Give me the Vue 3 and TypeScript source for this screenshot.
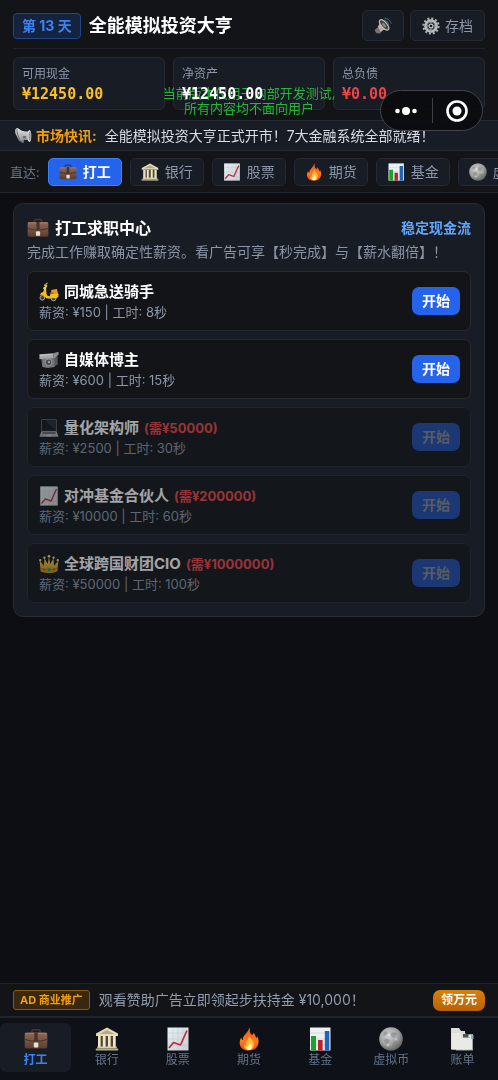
<script setup lang="ts">
import { computed, ref } from 'vue'

interface Section {
  id: string
  label: string
  icon: string
}

interface Job {
  icon: string
  name: string
  pay: number
  seconds: number
  required?: number
}

const sections: Section[] = [
  { id: 'work', label: '打工', icon: 'briefcase' },
  { id: 'bank', label: '银行', icon: 'bank' },
  { id: 'stock', label: '股票', icon: 'trend' },
  { id: 'futures', label: '期货', icon: 'fire' },
  { id: 'fund', label: '基金', icon: 'bars' },
  { id: 'crypto', label: '虚拟币', icon: 'moon' },
]
const navItems: Section[] = [...sections, { id: 'bill', label: '账单', icon: 'files' }]

const jobs: Job[] = [
  { icon: 'scooter', name: '同城急送骑手', pay: 150, seconds: 8 },
  { icon: 'camera', name: '自媒体博主', pay: 600, seconds: 15 },
  { icon: 'laptop', name: '量化架构师', pay: 2500, seconds: 30, required: 50000 },
  { icon: 'trend', name: '对冲基金合伙人', pay: 10000, seconds: 60, required: 200000 },
  { icon: 'crown', name: '全球跨国财团CIO', pay: 50000, seconds: 100, required: 1000000 },
]

const active = ref('work')
const cash = ref(12450)
const debt = ref(0)
const money = (n: number): string => `¥${n.toFixed(2)}`

const stats = computed(() => [
  { label: '可用现金', value: money(cash.value), tone: 'gold' },
  { label: '净资产', value: money(cash.value - debt.value), tone: 'white' },
  { label: '总负债', value: money(debt.value), tone: 'red' },
])

const locked = (job: Job): boolean => job.required !== undefined && cash.value < job.required
</script>

<template>
  <svg class="sprite" aria-hidden="true">
    <defs>
      <linearGradient id="leather" x1="0" y1="0" x2="0" y2="1">
        <stop offset="0" stop-color="#8f6a55" />
        <stop offset="1" stop-color="#5b3d31" />
      </linearGradient>
      <linearGradient id="flame" x1="0" y1="0" x2="0" y2="1">
        <stop offset="0" stop-color="#f4511e" />
        <stop offset="0.6" stop-color="#ff7a1c" />
        <stop offset="1" stop-color="#f2461b" />
      </linearGradient>
      <radialGradient id="lunar" cx="0.4" cy="0.35" r="0.7">
        <stop offset="0" stop-color="#d2d3d2" />
        <stop offset="0.6" stop-color="#9c9e9f" />
        <stop offset="1" stop-color="#55585b" />
      </radialGradient>
      <linearGradient id="paper" x1="0" y1="0" x2="1" y2="1">
        <stop offset="0" stop-color="#e9f0f3" />
        <stop offset="1" stop-color="#c7d0d6" />
      </linearGradient>
      <linearGradient id="gold" x1="0" y1="0" x2="0" y2="1">
        <stop offset="0" stop-color="#ffd84a" />
        <stop offset="1" stop-color="#c98a12" />
      </linearGradient>
      <linearGradient id="horn" x1="0" y1="0" x2="0" y2="1">
        <stop offset="0" stop-color="#e8e8e6" />
        <stop offset="1" stop-color="#8c8e90" />
      </linearGradient>
    </defs>
    <symbol id="briefcase" viewBox="0 0 24 24">
      <path d="M8 6V4.200Q8 2.800 9.500 2.800H14.500Q16 2.800 16 4.200V6" fill="none" stroke="#4b342b" stroke-width="1.600" />
      <rect x="0.700" y="5.500" width="22.600" height="16" rx="1.800" fill="url(#leather)" />
      <path d="M1 6.500H23" stroke="#aa8370" stroke-width="0.800" />
      <path d="M1 12.500Q12 16 23 12.500" fill="none" stroke="#46302a" stroke-width="1" />
      <path d="M10.300 5.500H13.700V14H10.300Z" fill="#4a322a" />
      <rect x="9.800" y="15.500" width="4.500" height="5" rx="1" fill="#e4e0d5" />
    </symbol>
    <symbol id="bank" viewBox="0 0 24 24">
      <path d="M12 0.500L23 6.500V9H1V6.500Z" fill="#e4dbb9" />
      <path d="M12 3L19.500 7H4.500Z" fill="#b3a984" />
      <path d="M3 9H21V20H3Z" fill="#4d4736" />
      <path d="M3 9H6V20H3ZM7.800 9H10.700V20H7.800ZM13 9H16V20H13ZM18 9H21V20H18Z" fill="#efe7c8" />
      <path d="M5.200 9H6V20H5.200ZM10 9H10.700V20H10ZM15.200 9H16V20H15.200ZM20.200 9H21V20H20.200Z" fill="#a89f7c" />
      <path d="M2.300 19.500H21.700V21.500H2.300Z" fill="#d8ceaa" />
      <path d="M0.800 21.500H23.200V23.500H0.800Z" fill="#b9ae87" />
    </symbol>
    <symbol id="trend" viewBox="0 0 24 24">
      <rect x="1.500" y="0.500" width="21" height="23" fill="url(#paper)" />
      <path d="M7 1V23M12 1V23M17 1V23M2 6H22M2 12H22M2 18H22" stroke="#b9c7ce" stroke-width="0.500" />
      <path d="M3 21L7.500 15.500L14.500 18L21 3.500" fill="none" stroke="#c7283d" stroke-width="1.700" stroke-linejoin="round" />
    </symbol>
    <symbol id="fire" viewBox="0 0 24 24">
      <path d="M12.500 0.500C13.500 3 12 4.500 14 7C15.500 8.800 16.500 7.500 16.300 5.500C18.500 7.500 18.300 9.500 19.500 11C20 10.500 20.100 10 20 9.200C23 13 22.500 23.500 12 23.500C2.500 23.500 1 15.500 4.200 10.500C4.500 12 5 12.800 6 13C5 9 10.500 6.500 12.500 0.500Z" fill="url(#flame)" />
      <path d="M12 8C12.500 11.500 17 13 17 17.500C17 21 15 23 12 23C8.500 23 6.500 20.500 7 17.500C7.500 18.300 8.200 18.800 9 18.500C8 15 12 12.500 12 8Z" fill="#ffba38" />
      <path d="M12.500 14C12.500 16.500 15 17.200 15 19.700C15 22 13.500 23 12 23C10 23 8.800 21.500 9.300 20C11.500 20 12.500 17 12.500 14Z" fill="#fff0a0" />
    </symbol>
    <symbol id="bars" viewBox="0 0 24 24">
      <rect x="2" y="0.500" width="20.500" height="23" fill="#edf0f3" />
      <path d="M2 6H22M2 12H22M2 18H22" stroke="#c7cdd2" stroke-width="0.600" />
      <rect x="3" y="9" width="5" height="14.500" fill="#18a52d" />
      <rect x="10" y="13" width="4.600" height="10.500" fill="#bd2029" />
      <rect x="16.800" y="4" width="4.500" height="19.500" fill="#1e65b8" />
    </symbol>
    <symbol id="moon" viewBox="0 0 24 24">
      <circle cx="12" cy="12" r="11.800" fill="url(#lunar)" />
      <path d="M5 5Q8 3 9 6Q7 9 4 9ZM12 6Q16 4 18 7Q16 8 15 11Q11 10 12 6ZM5 13Q9 10 11 14Q9 17 7 17ZM14 15Q18 13 20 16Q17 20 13 20Z" fill="#737678" opacity="0.450" />
      <circle cx="9" cy="18" r="1.400" fill="#d5d6d5" opacity="0.700" />
      <circle cx="17" cy="12" r="1" fill="#d5d6d5" opacity="0.700" />
      <circle cx="10" cy="8" r="0.900" fill="#eeeeec" opacity="0.700" />
    </symbol>
    <symbol id="files" viewBox="0 0 24 24">
      <path d="M4 4H14L16 7H23V23.500H6Z" fill="#9da1a3" />
      <path d="M12 8H22V22.500H12Z" fill="#e9e9e5" />
      <path d="M1 1H9L11 4H15V22.500H1Z" fill="#dddeda" />
      <path d="M2 6H10L12 10H20V22.500H2Z" fill="#e9e9e5" />
      <path d="M12 10.500H20" stroke="#bfc1bd" stroke-width="0.700" />
      <rect x="13" y="7" width="5.500" height="3.500" fill="#4d5558" />
      <rect x="21" y="8" width="2.500" height="4" fill="#87aeb7" />
    </symbol>
    <symbol id="megaphone" viewBox="0 0 24 24">
      <path d="M7 14L14 17L12.500 21.500L8.500 19.500Z" fill="#75787b" />
      <path d="M2 3Q0.500 7 3.500 12L7 19Q13 15 21.500 18.500V5.500Q11 7 6 2Q4 0.500 2 3Z" fill="url(#horn)" />
      <path d="M4 2Q3 7 8 18" fill="none" stroke="#77797b" stroke-width="1.400" />
      <ellipse cx="20.500" cy="12" rx="2.600" ry="8" fill="#dededa" />
      <ellipse cx="20.800" cy="12" rx="1.400" ry="5.800" fill="#8d9092" />
      <path d="M12 12H16V15H12Z" fill="#6a6d70" />
    </symbol>
    <symbol id="speaker" viewBox="0 0 24 24">
      <path d="M1 17L6 13L11 18L8 22Q2 23 1 17Z" fill="#77736d" />
      <path d="M5 13Q8 10 8 4L19 17Q13 16 9 20Z" fill="#b6b1a5" />
      <ellipse cx="13.500" cy="10.500" rx="3.700" ry="8.500" transform="rotate(-41 13.500 10.500)" fill="#454744" stroke="#c9c5b9" stroke-width="1.500" />
      <ellipse cx="13.500" cy="11" rx="1.400" ry="3.500" transform="rotate(-41 13.500 11)" fill="#908d84" />
      <path d="M14 4Q19 5 20 11M14 1.500Q21 2 23 9M16 6Q18 7 18 9" fill="none" stroke="#4e7180" stroke-width="1.200" />
    </symbol>
    <symbol id="gear" viewBox="0 0 24 24">
      <circle cx="12" cy="12" r="10" fill="none" stroke="#acb0b2" stroke-width="3" stroke-dasharray="2.700 2.540" />
      <circle cx="12" cy="12" r="7.300" fill="none" stroke="#b9bcbd" stroke-width="3.600" />
      <circle cx="12" cy="12" r="5" fill="none" stroke="#707579" stroke-width="1.500" />
      <circle cx="12" cy="12" r="2.600" fill="none" stroke="#bfc1c2" stroke-width="1.600" />
      <path d="M12 3V9M12 15V21M3 12H9M15 12H21" stroke="#a2a5a7" stroke-width="1.200" />
    </symbol>
    <symbol id="scooter" viewBox="0 0 24 24">
      <circle cx="4" cy="19" r="2.800" fill="#3d3e41" stroke="#a8a9aa" stroke-width="1.200" />
      <circle cx="17.500" cy="19.800" r="2.800" fill="#3d3e41" stroke="#a8a9aa" stroke-width="1.200" />
      <path d="M6.500 4L9.500 3L10 5.500L8.500 7L9 14Q9.500 17 13 17L14 13Q20 10 23.500 14.500Q24 18 21 19.500H9Q6 18 5 16Q2 14.500 1 17Q1 13 5 12L7 6.500Z" fill="#f2be22" />
      <path d="M14.500 9.500L21.500 8.500L23 14H15Z" fill="#e79a1e" />
      <path d="M12.500 12.500H17.500V14H13Z" fill="#94511f" />
      <path d="M10.500 1L6 4M10 19H15" stroke="#c9b578" stroke-width="1.300" />
      <circle cx="6.500" cy="7.500" r="1.400" fill="#ffe373" />
    </symbol>
    <symbol id="camera" viewBox="0 0 24 24">
      <path d="M2.500 8H19V20.500Q10 22.500 4 20.500Z" fill="#72757a" />
      <path d="M0.500 5L17 4V9.500L0.500 11Z" fill="#a4a7aa" />
      <path d="M17 4L23.500 2V5L20 9.500H17Z" fill="#8b8e91" />
      <path d="M1 6.500L16 5.500" stroke="#c9cbcd" stroke-width="1" />
      <circle cx="11.500" cy="14.800" r="4" fill="#44484b" stroke="#a2a5a7" />
      <circle cx="12" cy="14.500" r="1.500" fill="#9099a0" />
      <path d="M19 9.500L22.500 8V17.500L19 19.500Z" fill="#54575b" />
    </symbol>
    <symbol id="laptop" viewBox="0 0 24 24">
      <path d="M3 1.500H21V16H3Z" fill="#9a9ea2" />
      <path d="M3.600 2.100H20.400V15.500H3.600Z" fill="#0f161b" />
      <path d="M9 2.100H20.400V15L9 5Z" fill="#1f2a31" />
      <path d="M3 16H21L23.500 22.500H0.500Z" fill="#adafb2" />
      <path d="M4.500 17H19.500L20.300 19H3.700Z" fill="#4b4f53" />
      <path d="M9.500 20H14.500L15 22H9Z" fill="#c9cbcd" />
    </symbol>
    <symbol id="crown" viewBox="0 0 24 24">
      <path d="M2 21L0.800 8L6 14L6.500 5L10.500 12L12 3L13.500 12L17.500 5L18 14L23.200 8L22 21Q12 25 2 21Z" fill="url(#gold)" />
      <path d="M2 17Q12 21 22 17" fill="none" stroke="#8e5c0b" stroke-width="0.800" />
      <circle cx="12" cy="18.800" r="2.200" fill="#259b62" />
      <circle cx="6" cy="18.500" r="1.200" fill="#bc3540" />
      <circle cx="18" cy="18.500" r="1.200" fill="#bc3540" />
      <g fill="#ffe376">
        <circle cx="1.500" cy="7.500" r="1.400" /><circle cx="6.500" cy="4.500" r="1.400" />
        <circle cx="12" cy="2.700" r="1.600" /><circle cx="17.500" cy="4.500" r="1.400" />
        <circle cx="22.500" cy="7.500" r="1.400" />
      </g>
    </symbol>
  </svg>

  <div class="app">
    <header class="top">
      <div class="title-row">
        <span class="day">第 13 天</span>
        <h1>全能模拟投资大亨</h1>
        <button class="tool" type="button" aria-label="声音">
          <svg class="icon"><use href="#speaker" /></svg>
        </button>
        <button class="tool" type="button">
          <svg class="icon"><use href="#gear" /></svg>存档
        </button>
      </div>
      <div class="stats">
        <div v-for="s in stats" :key="s.label" class="stat">
          <span class="stat-label">{{ s.label }}</span>
          <strong class="stat-value" :class="s.tone">{{ s.value }}</strong>
        </div>
      </div>
      <p class="notice">当前版本仅用于内部开发测试,<br />所有内容均不面向用户</p>
      <div class="capsule">
        <button type="button" aria-label="更多">
          <svg width="22" height="10" viewBox="0 0 22 10" fill="#fff">
            <circle cx="2.500" cy="5" r="2.300" /><circle cx="11" cy="5" r="4" /><circle cx="19.500" cy="5" r="2.300" />
          </svg>
        </button>
        <button type="button" aria-label="关闭">
          <svg width="22" height="22" viewBox="0 0 22 22">
            <circle cx="11" cy="11" r="9.500" fill="none" stroke="#fff" stroke-width="2.600" />
            <circle cx="11" cy="11" r="4.500" fill="#fff" />
          </svg>
        </button>
      </div>
    </header>

    <div class="ticker">
      <svg class="icon"><use href="#megaphone" /></svg>
      <strong>市场快讯:</strong>
      <span>全能模拟投资大亨正式开市！7大金融系统全部就绪！</span>
    </div>

    <nav class="shortcuts" aria-label="直达">
      <span class="shortcuts-label">直达:</span>
      <button
        v-for="s in sections"
        :key="s.id"
        type="button"
        class="chip"
        :class="{ on: active === s.id }"
        @click="active = s.id"
      >
        <svg class="icon"><use :href="'#' + s.icon" /></svg>{{ s.label }}
      </button>
    </nav>

    <main>
      <section class="panel">
        <div class="panel-head">
          <h2><svg class="icon"><use href="#briefcase" /></svg>打工求职中心</h2>
          <span class="tag">稳定现金流</span>
        </div>
        <p class="desc">完成工作赚取确定性薪资。看广告可享【秒完成】与【薪水翻倍】！</p>
        <ul class="jobs">
          <li v-for="job in jobs" :key="job.name" class="job" :class="{ locked: locked(job) }">
            <div class="job-info">
              <h3>
                <svg class="icon"><use :href="'#' + job.icon" /></svg>{{ job.name }}
                <span v-if="job.required" class="need">(需¥{{ job.required }})</span>
              </h3>
              <p>薪资: ¥{{ job.pay }} | 工时: {{ job.seconds }}秒</p>
            </div>
            <button class="start" type="button" :disabled="locked(job)">开始</button>
          </li>
        </ul>
      </section>
    </main>

    <footer>
      <div class="ad">
        <span class="ad-badge">AD 商业推广</span>
        <span class="ad-text">观看赞助广告立即领起步扶持金 ¥10,000！</span>
        <button type="button" class="claim">领万元</button>
      </div>
      <nav class="tabbar" aria-label="主导航">
        <button
          v-for="n in navItems"
          :key="n.id"
          type="button"
          :class="{ on: active === n.id }"
          @click="active = n.id"
        >
          <svg class="icon"><use :href="'#' + n.icon" /></svg>
          <span>{{ n.label }}</span>
        </button>
      </nav>
    </footer>
  </div>
</template>

<style>
body {
  margin: 0;
  background: #0c0e13;
}
</style>

<style scoped>
.sprite {
  position: absolute;
  width: 0;
  height: 0;
}
.app {
  display: flex;
  flex-direction: column;
  min-height: 100vh;
  overflow: hidden;
  background: #0c0e13;
  color: #fff;
  font-family: Inter, "Noto Sans CJK SC", sans-serif;
  font-size: 14px;
  line-height: 20px;
}
h1, h2, h3, p, ul {
  margin: 0;
  padding: 0;
}
button {
  box-sizing: border-box;
  margin: 0;
  padding: 0;
  border: 0;
  background: none;
  color: inherit;
  font: inherit;
  cursor: pointer;
}
.icon {
  flex: none;
  width: 18px;
  height: 18px;
}
.top {
  position: relative;
  padding: 10px 13px;
  background: #121417;
}
.title-row {
  display: flex;
  align-items: center;
  gap: 6px;
  padding-bottom: 7px;
  border-bottom: 1px solid #1f2228;
}
.day {
  padding: 2px 8px;
  border: 1px solid #1f458d;
  border-radius: 4px;
  background: #16233f;
  color: #3b82f6;
  font-weight: 700;
}
h1 {
  flex: 1;
  padding-left: 2px;
  font-size: 18px;
  line-height: 26px;
  font-weight: 700;
}
.tool {
  display: flex;
  align-items: center;
  gap: 5px;
  height: 31px;
  padding: 0 11px;
  border: 1px solid #262a33;
  border-radius: 5px;
  background: #181c25;
  color: #8d97a8;
}
.stats {
  display: grid;
  grid-template-columns: repeat(3, 1fr);
  gap: 8px;
  padding-top: 8px;
}
.stat {
  display: flex;
  flex-direction: column;
  padding: 6px 8px 5px;
  border: 1px solid #252932;
  border-radius: 6px;
  background: #181c25;
}
.stat-label {
  color: #8d97a8;
  font-size: 12px;
}
.stat-value {
  font-family: "DejaVu Sans Mono", monospace;
  font-size: 15px;
}
.gold { color: #fbbf24; }
.white { color: #fff; }
.red { color: #ef4444; }
.notice {
  position: absolute;
  top: 86px;
  left: 0;
  right: 0;
  color: #26b735;
  font-size: 13px;
  line-height: 15px;
  text-align: center;
  mix-blend-mode: lighten;
  pointer-events: none;
}
.capsule {
  position: absolute;
  z-index: 2;
  top: 90px;
  right: 15px;
  display: flex;
  box-sizing: border-box;
  width: 103px;
  height: 41px;
  border: 1px solid #42454a;
  border-radius: 21px;
  background: rgba(10, 11, 13, 0.9);
}
.capsule button {
  display: flex;
  flex: 1;
  align-items: center;
  justify-content: center;
}
.capsule button + button {
  position: relative;
}
.capsule button + button::before {
  content: "";
  position: absolute;
  top: 7px;
  bottom: 7px;
  left: 0;
  border-left: 1px solid #3c3f44;
}
.ticker {
  display: flex;
  align-items: center;
  height: 29px;
  padding: 0 14px;
  border-top: 1px solid #262a33;
  border-bottom: 1px solid #262a33;
  background: #181c25;
  color: #d8dce3;
  white-space: nowrap;
}
.ticker strong {
  margin: 0 8px 0 4px;
  color: #f59e0b;
}
.shortcuts {
  display: flex;
  gap: 8px;
  align-items: center;
  height: 41px;
  padding-left: 10px;
  overflow: hidden;
  border-bottom: 1px solid #22262e;
  background: #121417;
}
.shortcuts-label {
  flex: none;
  color: #68758a;
  font-size: 13px;
}
.chip {
  display: flex;
  flex: none;
  align-items: center;
  gap: 6px;
  height: 28px;
  padding: 0 10px;
  border: 1px solid #242933;
  border-radius: 5px;
  background: #181c25;
  color: #8d97a8;
}
.chip.on {
  border-color: #3b82f6;
  background: #2563eb;
  color: #fff;
  font-weight: 700;
}
main {
  flex: 1;
  padding: 10px 13px;
}
.panel {
  padding: 13px;
  border: 1px solid #262b34;
  border-radius: 10px;
  background: #181c25;
}
.panel-head {
  display: flex;
  align-items: center;
  justify-content: space-between;
}
h2 {
  display: flex;
  align-items: center;
  gap: 6px;
  font-size: 16px;
  line-height: 22px;
}
h2 .icon {
  width: 22px;
  height: 22px;
}
.tag {
  color: #60a5fa;
  font-weight: 700;
}
.desc {
  padding: 3px 0 9px;
  color: #8b94a4;
}
.jobs {
  display: grid;
  gap: 8px;
  list-style: none;
}
.job {
  display: flex;
  align-items: center;
  justify-content: space-between;
  padding: 9px 10px 9px 11px;
  border: 1px solid #262a30;
  border-radius: 7px;
  background: #121417;
}
.job.locked {
  opacity: 0.6;
}
h3 {
  display: flex;
  align-items: center;
  gap: 5px;
  font-size: 15px;
  line-height: 22px;
}
h3 .icon {
  width: 20px;
  height: 20px;
}
.need {
  color: #ef4444;
  font-size: 13px;
}
.job p {
  color: #8d97a8;
  font-size: 13px;
  line-height: 18px;
}
.start {
  height: 28px;
  padding: 0 10px;
  border-radius: 7px;
  background: #2563eb;
  color: #fff;
  font-weight: 700;
}
.start:disabled {
  opacity: 0.7;
  color: #b4b8c1;
}
.ad {
  display: flex;
  align-items: center;
  gap: 9px;
  height: 32px;
  padding: 0 13px;
  border-top: 1px solid #22252b;
  background: #121417;
}
.ad-badge {
  padding: 0 6px;
  border: 1px solid #89590e;
  border-radius: 3px;
  background: #382810;
  color: #f59e0b;
  font-size: 11px;
  line-height: 18px;
  font-weight: 700;
}
.ad-text {
  flex: 1;
  color: #929cac;
}
.claim {
  height: 21px;
  padding: 0 8px;
  border-radius: 7px;
  background: linear-gradient(#d98208, #b76108);
  color: #fff;
  font-size: 12px;
  font-weight: 700;
}
.tabbar {
  display: grid;
  grid-template-columns: repeat(7, 1fr);
  padding: 5px 0 8px;
  border-top: 2px solid #20242c;
  background: #0e1117;
}
.tabbar button {
  display: flex;
  flex-direction: column;
  align-items: center;
  padding: 4px 0 3px;
  border-radius: 6px;
  color: #64748b;
  font-size: 12px;
  line-height: 18px;
}
.tabbar .icon {
  width: 24px;
  height: 24px;
}
.tabbar .on {
  background: #181c25;
  color: #3b82f6;
  font-weight: 700;
}
</style>
